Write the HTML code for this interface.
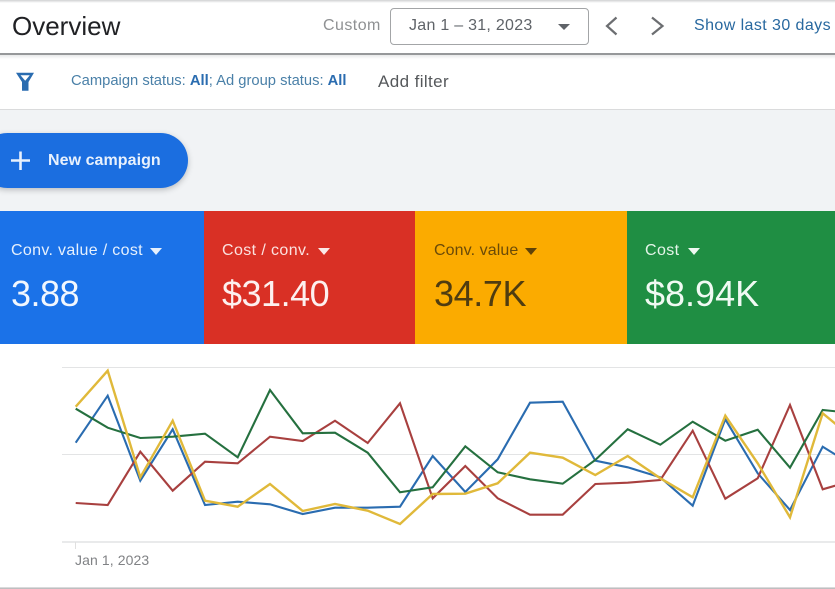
<!DOCTYPE html>
<html><head><meta charset="utf-8">
<style>
html,body{margin:0;padding:0;width:835px;height:589px;overflow:hidden;background:#fff;font-family:"Liberation Sans",sans-serif}
#r{position:relative;width:835px;height:589px;overflow:hidden;background:#fff;filter:blur(.3px)}
.a{position:absolute;white-space:nowrap}
.lab{font-size:16px;line-height:20px;top:241px}
.val{font-size:36px;line-height:42px;top:273px}
.card{position:absolute;top:211px;height:133px}
.tri{position:absolute;top:248px;width:0;height:0;border-left:6.5px solid transparent;border-right:6.5px solid transparent}
</style></head><body><div id="r">
<div class="a" style="left:0;top:0;width:835px;height:3px;background:linear-gradient(#d0d1d2,#fff)"></div>
<div class="a" style="left:12px;top:10px;font-size:26px;line-height:32px;color:#202124">Overview</div>
<div class="a" style="left:323px;top:16px;font-size:16px;line-height:20px;color:#8f9193;letter-spacing:.45px">Custom</div>
<div class="a" style="left:390px;top:8px;width:197px;height:35px;border:1px solid #a3a5a7;border-radius:4px;background:#fff"></div>
<div class="a" style="left:409px;top:16px;font-size:16px;line-height:20px;color:#5f6368;letter-spacing:.27px">Jan 1 – 31, 2023</div>
<div class="a" style="left:558px;top:24px;width:0;height:0;border-left:6.5px solid transparent;border-right:6.5px solid transparent;border-top:6.5px solid #5f6368"></div>
<svg class="a" style="left:600px;top:12px" width="70" height="28" fill="none" stroke="#6c6e71" stroke-width="2.2"><path d="M16.500 5.500 L7 14 L16.500 22.500"/><path d="M52 5.500 L62.500 14 L52 22.500"/></svg>
<div class="a" style="left:694px;top:16px;font-size:16px;line-height:20px;color:#28689f;letter-spacing:.42px">Show last 30 days</div>
<div class="a" style="left:0;top:53px;width:835px;height:2px;background:#96989a"></div>
<div class="a" style="left:0;top:55px;width:835px;height:4px;background:linear-gradient(#e8e9ea,#fff)"></div>

<svg class="a" style="left:15px;top:71px" width="21" height="21"><path d="M1 1.700H19L13.500 11V19.700H7V11Z M5.500 4.200H14.800L10.200 9.800Z" fill="#2a6cb0" fill-rule="evenodd"/></svg>
<div class="a" style="left:71px;top:72px;font-size:14.75px;line-height:18px;color:#4a80a8">Campaign status: <b style="color:#2a6cb0">All</b>; Ad group status: <b style="color:#2a6cb0">All</b></div>
<div class="a" style="left:378px;top:72px;font-size:17px;line-height:20px;color:#55585b;letter-spacing:.4px">Add filter</div>
<div class="a" style="left:0;top:109px;width:835px;height:1px;background:#dadbdc"></div>
<div class="a" style="left:0;top:110px;width:835px;height:101px;background:#f1f3f5"></div>

<div class="a" style="left:-20px;top:133px;width:208px;height:55px;border-radius:28px;background:#1b6ee0;box-shadow:0 2px 6px rgba(60,64,67,.3)"></div>
<svg class="a" style="left:10px;top:150px" width="21" height="21"><path d="M10.500 1.500V20M1 10.500H20" stroke="#e8f1fd" stroke-width="2.600"/></svg>
<div class="a" style="left:48px;top:151px;font-size:16px;line-height:20px;font-weight:bold;color:#e8f1fd;letter-spacing:.06px">New campaign</div>

<div class="card" style="left:0;width:204px;background:#1b72e8"></div>
<div class="card" style="left:204px;width:211px;background:#d93025"></div>
<div class="card" style="left:415px;width:212px;background:#fbab00"></div>
<div class="card" style="left:627px;width:208px;background:#1f8e43"></div>

<div class="a lab" style="left:11px;color:#e6f0fd;letter-spacing:.33px">Conv. value / cost</div>
<div class="tri" style="left:150px;border-top:7px solid #e6f0fd"></div>
<div class="a val" style="left:11px;color:#f2f7fe;letter-spacing:-.5px">3.88</div>

<div class="a lab" style="left:222px;color:#fbe2e0;letter-spacing:.4px">Cost / conv.</div>
<div class="tri" style="left:318px;border-top:7px solid #fbe9e7"></div>
<div class="a val" style="left:222px;color:#fdf0ef;letter-spacing:-.5px">$31.40</div>

<div class="a lab" style="left:434px;color:#6a4a08;letter-spacing:.1px">Conv. value</div>
<div class="tri" style="left:525px;border-top:7px solid #5f4208"></div>
<div class="a val" style="left:434px;color:#4f3c10;letter-spacing:-.4px">34.7K</div>

<div class="a lab" style="left:645px;color:#e4f5e9;letter-spacing:.4px">Cost</div>
<div class="tri" style="left:688px;border-top:7px solid #eef9f1"></div>
<div class="a val" style="left:645px;color:#f0faf3">$8.94K</div>

<svg class="a" style="left:0;top:344px" width="835" height="245" viewBox="0 344 835 245" fill="none" stroke-linejoin="miter">
<path d="M62 367.500H835M62 454.500H835" stroke="#e3e4e5" stroke-width="1"/>
<path d="M62 542H835" stroke="#dcdddf" stroke-width="1.300"/>
<path d="M75.500 542V549" stroke="#e0e0e0" stroke-width="1"/>
<path d="M0 588.200H835" stroke="#b4b5b7" stroke-width="1.300"/>
<g stroke-width="2.100">
<polyline stroke="#2a6cb0" points="75.700,442.700 107.700,395.700 140.300,480.700 172.700,429.300 205,505 237.700,501.700 270,504.300 302.700,514 335,507.700 367.700,507.700 400,506.700 432.700,456 465.300,492 497.700,459.300 530,402.700 562.700,401.700 595.300,460.700 627.700,467.300 660.300,477.300 692.700,505.700 725.300,419.300 757.700,473.300 790,510 822.700,446.700 855,466.700"/>
<polyline stroke="#a8403f" points="75.700,503 107.700,505 140.300,451.700 172.700,490.700 205,461.700 237.700,463.300 270,436.700 302.700,441 335,420.700 367.700,443 400,403.300 432.700,498.300 465.300,466 497.700,498.300 530,514.700 562.700,514.700 595.300,484 627.700,482.700 660.300,480 692.700,430.700 725.300,498.700 757.700,478.300 790,405 822.700,489.300 855,480"/>
<polyline stroke="#25703f" points="75.700,408.700 107.700,427.700 140.300,438 172.700,436.700 205,433.700 237.700,457.300 270,390 302.700,433.300 335,432.700 367.700,452.700 400,492.300 432.700,487.300 465.300,446.300 497.700,472.300 530,479.300 562.700,483.700 595.300,460 627.700,429.300 660.300,444.700 692.700,421.700 725.300,440.700 757.700,429.700 790,467.700 822.700,410 855,413.300"/>
<polyline stroke="#e0b93a" stroke-width="2.400" points="75.700,406.700 107.700,370.700 140.300,477.300 172.700,420.700 205,500.700 237.700,506.700 270,484 302.700,511 335,504 367.700,510.700 400,524 432.700,494 465.300,493.700 497.700,483.300 530,452.700 562.700,457.700 595.300,475 627.700,456 660.300,478.300 692.700,497.300 725.300,415.700 757.700,463.300 790,517.300 822.700,413.300 855,440"/>
</g>
</svg>
<div class="a" style="left:75px;top:552px;font-size:14px;line-height:17px;color:#808285;letter-spacing:.1px">Jan 1, 2023</div>
</div></body></html>
